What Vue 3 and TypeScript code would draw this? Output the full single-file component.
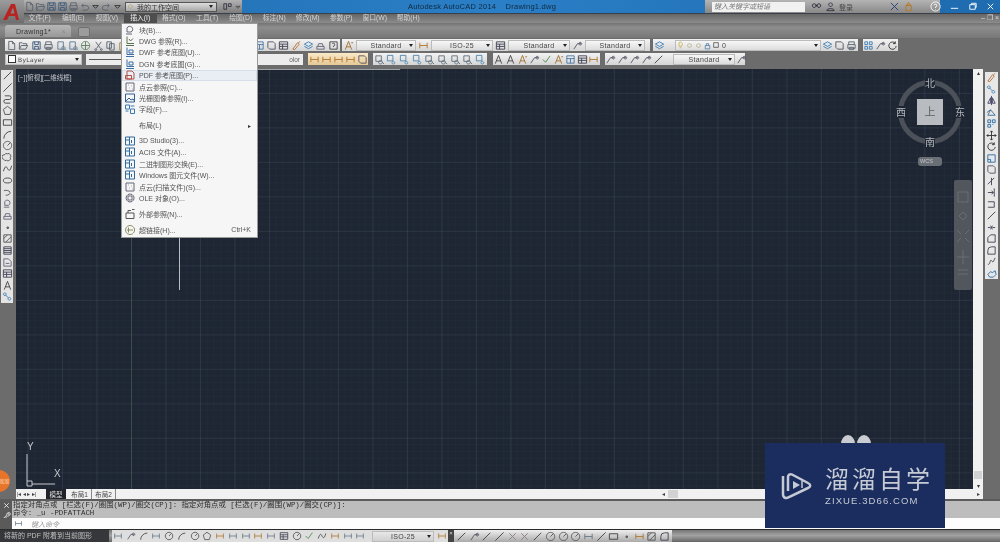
<script setup lang="ts">
import { h } from 'vue'

const P: Record<string, [string, string?]> = {
  new: ['M3 1.5h4l2.5 2.5v6.5h-6.5zM7 1.5V4h2.5'],
  open: ['M1.5 10V3h3l1 1h4v2M1.5 10l2-4h7l-2 4z'],
  save: ['M2 2h8v8H2zM4 2v3h4V2M4 10V7h4v3', '#3d5878'],
  print: ['M3 5V2h6v3M2 5h8v4H2zM3.5 8h5v2.5h-5z'],
  prev: ['M2 2h6v8H2zM8 7a1.8 1.8 0 1 0 .1 0M9.2 9.5l1.6 1.6', '#5f7a92'],
  globe: ['M6 1.5a4.5 4.5 0 1 0 .1 0M1.5 6h9M6 1.5v9', '#5e8060'],
  cut: ['M3 2l5 7M9 2L4 9M3 9.5a1 1 0 1 0 .1 0M9 9.5a1 1 0 1 0 .1 0'],
  copy: ['M2 2h5v7H2zM5 4h5v7H5z'],
  paste: ['M3 3h6v8H3zM5 2h2v2H5z', '#a08040'],
  undo: ['M3 5h5a2.5 2.5 0 0 1 0 5H4M3 5l2-2M3 5l2 2'],
  redo: ['M9 5H4a2.5 2.5 0 0 0 0 5h4M9 5L7 3M9 5L7 7'],
  grid: ['M2 2h3v3H2zM7 2h3v3H7zM2 7h3v3H2zM7 7h3v3H7z', '#3f7fb5'],
  layer: ['M6 2l4.5 2.5L6 7 1.5 4.5zM1.5 7L6 9.5 10.5 7', '#3f7fb5'],
  zoom: ['M2 2h6v6H2zM7 7a2 2 0 1 0 .1 0M9 9l2 2', '#60707f'],
  zoomb: ['M1.5 1.5h6v6h-6zM8 8a1.5 1.5 0 1 0 .1 0', '#4f86b0'],
  A: ['M2.5 10.5L6 1.5l3.5 9M4 7.5h4', '#444'],
  Ao: ['M2.5 10.5L6 1.5l3.5 9M4 7.5h4M9 3h2', '#a07030'],
  check: ['M2 6l3 3 5-7', '#4a8a50'],
  tbl: ['M2 2h8v8H2zM2 5h8M6 5v5', '#4a78a5'],
  dim: ['M2 3v6M10 3v6M2 6h8', '#687888'],
  dimo: ['M2 3v6M10 3v6M2 6h8', '#b07830'],
  lead: ['M2 10L6 4h4M9 2.5a1.5 1.5 0 1 0 .1 0', '#556'],
  line: ['M2 10L10 2M2 10h.1M10 2h.1', '#444'],
  xline: ['M1.5 10.5l9-9M4 8h.1M8 4h.1', '#444'],
  pline: ['M3 2h5a2 2 0 0 1 0 4H4a2 2 0 0 0 0 4h5', '#444'],
  poly: ['M6 1.5l4.5 3.3-1.7 5.5H3.2L1.5 4.8z', '#555'],
  rect: ['M1.5 3h9v6h-9z', '#444'],
  arc: ['M2 10.5A8 8 0 0 1 10 2.5', '#444'],
  circle: ['M6 1.5a4.5 4.5 0 1 0 .1 0M6 6l3-3', '#555'],
  cloud: ['M3 3a2 2 0 0 1 3-1 2 2 0 0 1 3 1 2 2 0 0 1 0 3 2 2 0 0 1-1 3 2 2 0 0 1-3 0 2 2 0 0 1-3-1 2 2 0 0 1 1-5z', '#555'],
  spline: ['M1.5 9c2-6 3-6 4.5-3s3 3 4.5-3', '#444'],
  ell: ['M1.5 6a4.5 2.7 0 1 0 9 0 4.5 2.7 0 1 0-9 0', '#444'],
  ellarc: ['M2 4a4.5 2.7 0 1 1 2 5', '#555'],
  ins: ['M3 4a3 3 0 1 1 4 4H3zM2 10h6', '#667'],
  block: ['M2 7h8v3H2zM3 7l1-3h4l1 3', '#667'],
  pt: ['M5.5 5.5h1.5v1.5H5.5z', '#444'],
  hatch: ['M2 2h8v8H2zM2 6l4-4M4 10l6-6', '#555'],
  hatch2: ['M2 2h8v8H2zM2 4h8M2 6h8M2 8h8', '#445'],
  region: ['M2 2h5l3 3v5H2zM4 7h4', '#667'],
  table: ['M1.5 2h9v8h-9zM1.5 4.5h9M1.5 7h9M5 4.5V10', '#445'],
  erase: ['M2 10l5-7 2 1.5-5 6zM8 3l2-1.5', '#b8723a'],
  cp2: ['M3 2a1.5 1.5 0 1 0 .1 0M8 7a1.5 1.5 0 1 0 .1 0M3.5 4l3.5 3.5', '#3f7fb5'],
  mir: ['M6 1v10M5 3L2 9h3zM7 3l3 6H7z', '#446'],
  off: ['M2 9l3-6 5 6zM1 6l4-3', '#3f6f95'],
  arr: ['M2 2h3v3H2zM7 2h3v3H7zM2 7h3v3H2zM7 7h1', '#2e6ea5'],
  move: ['M6 1v10M1 6h10M6 1L4.5 2.5M6 1l1.5 1.5M6 11l-1.5-1.5M6 11l1.5-1.5M1 6l1.5-1.5M1 6l1.5 1.5M11 6L9.5 4.5M11 6L9.5 7.5', '#333'],
  rot: ['M9 3.5a4 4 0 1 0 1 3M9 1.5v2.5H6.5', '#333'],
  scale: ['M2 2h8v8H2zM2 7h3v3', '#2e6ea5'],
  str: ['M2 2h6l2 2v6H4L2 8z', '#556'],
  trim: ['M6 2v8M2 9l7-7', '#445'],
  ext: ['M9 1.5v9M2 6h6M6 4l2 2-2 2', '#445'],
  brk: ['M3 3H9v6H3M2 3h1M2 9h1', '#445'],
  join: ['M2 6h3M7 6h3M5 4l1 2-1 2M7 4L6 6l1 2', '#445'],
  cham: ['M2 10V5l3-3h5v8z', '#445'],
  fil: ['M2 10V6a4 4 0 0 1 4-4h4v8z', '#445'],
  blend: ['M2 9c3 1 2-6 4-4s1 3 4-3', '#445'],
  expl: ['M2 7l3-3 2 1 3-2 1 4-3 3H4z', '#2e6ea5'],
  bulb: ['M4 2.5a2.5 2.5 0 1 1 4 3L7.5 7h-3L4 5.500zM5 9h2', '#c8a83c'],
  sun: ['M6 3.5a2.5 2.5 0 1 0 .1 0', '#a8a070'],
  lock: ['M3 6h6v4.500H3zM4.500 6V3.500h3V6', '#4578a0'],
  sq: ['M2.500 2.500h7v7h-7z', '#333'],
  pdf: ['M3 2h5l2 2v6H3zM1.500 6.500h6v3.500h-6z', '#b05045'],
  dwg: ['M3 1.500v7h7M5 4l1.500 2L9 3.500M2 10.500h8', '#5a6f50'],
  dwf: ['M3 1.500v7h7M5 4h4v3H5zM2 10.500h8', '#3a6fa5'],
  cld: ['M2 2h8v8H2zM4 4h.5M7 5h.5M5 7h.5M8 8h.5', '#667'],
  img: ['M1.500 2h9v8h-9zM2 9l3-3 2 2 2-1 1.500 2', '#2f5f95'],
  fld: ['M1.500 2h4v4h-4zM6.500 6h4v4.500h-4zM6.500 3h4M1.500 8h3', '#3a78b0'],
  imp: ['M1.500 2h9v8h-9zM1.500 5h4M5.500 2v8M7.500 5v3', '#2f6a9f'],
  ole: ['M6 2a4 4 0 1 0 .1 0M4 4h4v4H4z', '#667'],
  xref: ['M2 5h8v5.500H2zM4 5V2.500h3M8 1.500h2.500', '#555'],
  link: ['M6 1.500a4.500 4.500 0 1 0 .1 0M3 6h6M4.500 3.500v5', '#8a8a60'],
  close: ['M3 3l6 6M9 3L3 9', '#fff'],
  wrench: ['M3 10l4-4a2.500 2.500 0 0 1 3-3L8.500 4.500l1 1L11 4a2.500 2.500 0 0 1-3 3l-4 4z', '#eee'],
  dn: ['M3 5h6L6 8z', '#333'],
  search: ['M3.500 3a2 2 0 1 0 .1 0M8.500 3a2 2 0 1 0 .1 0M5 5h2', '#223'],
  user: ['M6 2a2 2 0 1 0 .1 0M2 10.500c0-3 8-3 8 0z', '#334'],
  xicon: ['M2 2l8 8M10 2l-8 8', '#26406e'],
  key: ['M3 5h6v5.500H3zM6 1.500l2 3H4z', '#b87a20'],
  help: ['M6 1a5 5 0 1 0 .1 0M4.500 4.500a1.500 1.500 0 1 1 1.500 2v1M6 9v.5', '#fff'],
  wsw: ['M2 3h3v6H2zM7 3h3v3H7z', '#334'],
  min: ['M2 8h8', '#fff'],
  max: ['M3 4h6v5H3zM5 4V2.500h5v4.500H9', '#fff'],
  cross: ['M2.500 2.500l7 7M9.500 2.500l-7 7', '#8a7f80'],
  helpb: ['M2 2h8v8H2zM4.500 4.500a1.500 1.500 0 1 1 1.500 2v1', '#444'],
}

const Ic = (props: { n: string; s?: number }) => {
  const e = P[props.n] || P.sq
  const s = props.s ?? 11
  return h('svg', { width: s, height: s, viewBox: '0 0 12 12', fill: 'none', stroke: e[1] || '#5b6470', 'stroke-width': 1, class: 'ic' }, [h('path', { d: e[0] })])
}

const quick = ['new', 'open', 'save', 'save', 'print', 'undo', 'dn', 'redo', 'dn']
const menus = ['文件(F)', '编辑(E)', '视图(V)', '插入(I)', '格式(O)', '工具(T)', '绘图(D)', '标注(N)', '修改(M)', '参数(P)', '窗口(W)', '帮助(H)']
const std = ['new','open','save','print','prev','prev','globe','cut','copy','paste','paste','undo','redo','move','zoom','zoom','zoom','zoom','grid','tbl','tbl','str','table','erase','layer','block','helpb']
const t2a = ['dimo', 'dimo', 'dimo', 'dimo', 'str']
const t2b = ['zoom', 'zoomb', 'zoomb', 'zoomb', 'zoom', 'zoom', 'zoom', 'zoom', 'zoomb']
const t2c = ['A', 'A', 'Ao', 'lead', 'check', 'Ao', 'tbl', 'table', 'dimo']
const t2d = ['lead', 'lead', 'lead', 'lead', 'line']
const left = ['line','xline','pline','poly','rect','arc','circle','cloud','spline','ell','ellarc','ins','block','pt','hatch','hatch2','region','table','A','cp2']
const right = ['erase','cp2','mir','off','arr','move','rot','scale','str','trim','ext','brk','line','join','cham','fil','blend','expl']
const dims1 = ['dim','lead','arc','dim','circle','arc','circle','poly','dimo','dim','dim','dimo','dim','table','circle','check','spline','dimo','dim','dim']
const dims2 = ['line','lead','line','xline','cross','cross','line','circle','circle','circle','dim','xline','rect','pt','dimo','hatch','fil']

type Row = { t: string; i?: string; hot?: boolean; sub?: boolean; key?: string; sep?: boolean }
const rows: Row[] = [
  { t: '块(B)...', i: 'ins' },
  { t: 'DWG 参照(R)...', i: 'dwg' },
  { t: 'DWF 参考底图(U)...', i: 'dwf' },
  { t: 'DGN 参考底图(G)...', i: 'dwf' },
  { t: 'PDF 参考底图(P)...', i: 'pdf', hot: true },
  { t: '点云参照(C)...', i: 'cld' },
  { t: '光栅图像参照(I)...', i: 'img' },
  { t: '字段(F)...', i: 'fld' },
  { t: '布局(L)', sub: true, sep: true },
  { t: '3D Studio(3)...', i: 'imp', sep: true },
  { t: 'ACIS 文件(A)...', i: 'imp' },
  { t: '二进制图形交换(E)...', i: 'imp' },
  { t: 'Windows 图元文件(W)...', i: 'imp' },
  { t: '点云(扫描文件)(S)...', i: 'cld' },
  { t: 'OLE 对象(O)...', i: 'ole' },
  { t: '外部参照(N)...', i: 'xref', sep: true },
  { t: '超链接(H)...', i: 'link', key: 'Ctrl+K', sep: true },
]
</script>

<template>
  <div class="app">
    <header class="title">
      <div class="qa">
        <span class="qaicons"><Ic v-for="(q, i) in quick" :key="i" :n="q" /></span>
        <div class="ws"><Ic n="sun" :s="9" /><span>我的工作空间</span><i class="arrow"></i></div>
        <Ic n="wsw" /><Ic n="dn" :s="8" />
      </div>
      <div class="apptitle">Autodesk AutoCAD 2014 &nbsp; &nbsp;Drawing1.dwg</div>
      <div class="info">
        <div class="search">键入关键字或短语</div>
        <Ic n="search" /><Ic n="user" /><span class="login">登录</span>
        <span class="spacer"></span>
        <Ic n="xicon" /><Ic n="key" /><span class="spacer2"></span><Ic n="help" />
      </div>
      <div class="winbtns"><Ic n="min" /><Ic n="max" /><Ic n="close" /></div>
    </header>

    <nav class="menubar">
      <span v-for="m in menus" :key="m" class="mi" :class="{ on: m === '插入(I)' }">{{ m }}</span>
      <span class="doc"><b>–</b><b>❐</b><b>×</b></span>
    </nav>

    <div class="tabs">
      <div class="tab"><span>Drawing1*</span><em>×</em></div>
      <div class="tabplus"></div>
    </div>

    <div class="tools t1">
      <div class="grp g1"><Ic v-for="(n, i) in std" :key="i" :n="n" /></div>
      <div class="grp g2">
        <Ic n="Ao" /><div class="combo c60">Standard</div>
        <Ic n="dimo" /><div class="combo c62">ISO-25</div>
        <Ic n="table" /><div class="combo c62">Standard</div>
        <Ic n="lead" /><div class="combo c61">Standard</div>
      </div>
      <div class="grp g3">
        <Ic n="layer" /><span class="gap6"></span>
        <div class="combo layerc"><Ic n="bulb" :s="9" /><Ic n="sun" :s="9" /><Ic n="sun" :s="9" /><Ic n="lock" :s="9" /><Ic n="sq" :s="8" /><span class="zero">0</span></div>
        <Ic n="layer" /><Ic n="str" /><Ic n="print" />
      </div>
      <div class="grp g4"><Ic n="grid" /><Ic n="lead" /><Ic n="rot" /></div>
    </div>

    <div class="tools t2">
      <div class="combo bylayer"><i class="swatch"></i><span>ByLayer</span></div>
      <div class="ltype"><span class="dash"></span><span class="ctext">olor</span></div>
      <div class="grp ga"><Ic v-for="(n, i) in t2a" :key="i" :n="n" /></div>
      <div class="grp gb"><Ic v-for="(n, i) in t2b" :key="i" :n="n" /></div>
      <div class="grp gc"><Ic v-for="(n, i) in t2c" :key="i" :n="n" /></div>
      <div class="grp gd"><Ic v-for="(n, i) in t2d" :key="i" :n="n" /><div class="combo c62b">Standard</div><Ic n="lead" /></div>
    </div>

    <main class="work">
      <aside class="lbar"><Ic v-for="(n, i) in left" :key="i" :n="n" /></aside>
      <div class="centre">
        <div class="canvas">
          <span class="vp">[−][俯视][二维线框]</span>
          <div class="axis-v"></div>
          <div class="cross-v"></div>
          <div class="cross-h"></div>

          <div class="cube">
            <div class="ring"></div>
            <div class="face">上</div>
            <span class="dir n">北</span><span class="dir s">南</span><span class="dir w">西</span><span class="dir e">东</span>
            <div class="wcs">WCS</div>
          </div>

          <div class="navbar">
            <svg width="18" height="100" viewBox="0 0 18 100" fill="none" stroke="#686e75">
              <path d="M4 8h10v10H4zM5 32l4-4 4 4-4 4zM3 46l4 4M15 46l-4 4M3 58l4-4M15 58l-4-4M9 66v14M3 73h12M4 86h10M4 90h10" />
            </svg>
          </div>

          <svg class="ucs" width="50" height="52" viewBox="0 0 50 52" fill="none" stroke="#c5c8cc">
            <path d="M10 9v27M10 36v5h5v-5h-5M15 39h23" />
          </svg>
          <span class="ax ay">Y</span><span class="ax ax2">X</span>
          <div class="blob b1"></div><div class="blob b2"></div>
        </div>
        <div class="vscroll"><i class="up">▴</i><span class="fill"></span><i class="thumb"></i><i class="up">▾</i></div>
      </div>
      <aside class="rbar"><Ic v-for="(n, i) in right" :key="i" :n="n" /></aside>
    </main>

    <div class="layouts">
      <span class="nav">|◂ ◂ ▸ ▸|</span>
      <span class="lt model">模型</span>
      <span class="lt">布局1</span>
      <span class="lt">布局2</span>
      <span class="lfill"></span>
      <span class="hb">◂</span><span class="hthumb"></span><span class="hfill"></span><span class="hb end">▸</span>
    </div>

    <section class="cmd">
      <div class="handle"><Ic n="close" :s="9" /><Ic n="wrench" :s="10" /></div>
      <div class="hist">
        <div>指定对角点或 [栏选(F)/圈围(WP)/圈交(CP)]: 指定对角点或 [栏选(F)/圈围(WP)/圈交(CP)]:</div>
        <div>命令: _u -PDFATTACH</div>
      </div>
    </section>
    <div class="cinput"><Ic n="dim" :s="9" /><span class="prompt">键入命令</span></div>

    <footer class="status">
      <div class="stext">将新的 PDF 附着到当前图形</div>
      <div class="sgrp"><Ic v-for="(n, i) in dims1" :key="i" :n="n" /><div class="combo c62s">ISO-25</div><Ic n="dimo" /></div>
      <div class="sx">×</div>
      <div class="sgrp2"><Ic v-for="(n, i) in dims2" :key="i" :n="n" /></div>
    </footer>

    <div class="menu">
      <div v-for="r in rows" :key="r.t" class="row" :class="{ hot: r.hot, sep: r.sep }">
        <span class="ricon"><Ic v-if="r.i" :n="r.i" :s="12" /></span>
        <span class="rtext">{{ r.t }}</span>
        <span v-if="r.key" class="rkey">{{ r.key }}</span>
        <span v-if="r.sub" class="rsub">▸</span>
      </div>
    </div>

    <div class="logo">
      <svg width="20" height="20" viewBox="0 0 20 20"><path d="M1 18L9 2h4l4 16h-3l-1-4H7l-2 4zM8.500 11.500h4L11 5.500z" fill="#b92320" /></svg>
    </div>
    <div class="orange"><span>溜溜</span></div>

    <div class="mark">
      <svg width="36" height="36" viewBox="0 0 36 36" fill="none" stroke="#c5cad4" stroke-width="2.500">
        <path d="M4 8v18c0 4 3 5 6 3l19-9c3-1.500 3-3.500 0-5L13 6.500C11 5.500 9 7 9 9v14" />
        <path d="M14 13l7 4-7 4z" fill="#c5cad4" stroke="none" /><path d="M23 13v7" stroke-width="1.500" />
      </svg>
      <div class="mtxt">
        <div class="mcn">溜溜自学</div>
        <div class="men">ZIXUE.3D66.COM</div>
      </div>
    </div>
  </div>
</template>

<style>
html, body { margin: 0; background: #6c6c6c; }
</style>

<style scoped>
.app { position: relative; width: 1000px; height: 542px; overflow: hidden; display: flex; flex-direction: column; font-family: "Liberation Sans", "Noto Sans CJK SC", sans-serif; font-size: 7px; filter: blur(0.5px); background: #6c6c6c; color: #444; }
.ic { flex: none; display: block; }

.title { height: 13px; flex: none; display: flex; align-items: center; background: linear-gradient(90deg, #1f6cb0, #2b7fc6 50%, #1c69ae); position: relative; }
.qa { width: 218px; margin-left: 24px; height: 13px; display: flex; align-items: center; background: linear-gradient(#b2b2b2, #7d7d7d); flex: none; gap: 1px; }
.qaicons { display: flex; width: 98px; justify-content: space-between; margin-right: 2px; }
.ws { width: 94px; height: 10px; background: linear-gradient(#ddd, #a8a8a8); border: 1px solid #555; box-sizing: border-box; display: flex; align-items: center; gap: 2px; font-size: 7px; color: #333; margin-right: 4px; }
.ws span { flex: 1; }
.arrow { width: 0; height: 0; border: 2px solid transparent; border-top: 3px solid #222; border-bottom: 0; margin-right: 3px; }
.apptitle { position: absolute; left: 408px; top: 2px; font-size: 7.500px; letter-spacing: .25px; color: #10283e; white-space: nowrap; }
.info { position: absolute; left: 705px; width: 235px; height: 13px; background: linear-gradient(#b4b4b4, #888); display: flex; align-items: center; gap: 3px; box-sizing: border-box; padding-left: 7px; }
.search { width: 93px; flex: none; height: 10px; background: #f1f1f1; font-style: italic; color: #777; font-size: 7px; line-height: 10px; padding-left: 2px; box-sizing: border-box; margin-right: 3px; }
.login { color: #444; font-size: 7px; white-space: nowrap; flex: none; }
.spacer { width: 30px; flex: none; }
.spacer2 { width: 10px; flex: none; }
.winbtns { position: absolute; left: 945px; width: 55px; height: 13px; display: flex; justify-content: space-around; align-items: center; background: #1f6cb0; }

.menubar { height: 10px; flex: none; display: flex; align-items: center; padding-left: 23px; background: linear-gradient(#626262, #8c8c8c); position: relative; box-shadow: inset 0 1px #38414b; }
.mi { width: 33.500px; text-align: center; font-size: 6.800px; color: #d6d6d6; line-height: 10px; white-space: nowrap; box-sizing: border-box; }
.mi.on { background: #4e4e4e; color: #eee; }
.doc { position: absolute; right: 1px; top: 1px; display: flex; gap: 2px; color: #ddd; font-size: 7px; }
.doc b { font-weight: normal; }

.tabs { height: 15px; flex: none; display: flex; align-items: flex-end; gap: 7px; padding-left: 5px; background: linear-gradient(#747474, #8d8d8d 30%, #777); box-sizing: border-box; padding-bottom: 1px; }
.tab { width: 66px; height: 12px; background: linear-gradient(#b6b6b6, #999); border-radius: 3px 3px 0 0; display: flex; justify-content: space-between; align-items: center; padding: 0 5px 0 11px; box-sizing: border-box; font-size: 7px; color: #333; letter-spacing: .3px; }
.tab em { font-style: normal; color: #888; }
.tabplus { width: 12px; height: 10px; background: #9c9c9c; border-radius: 2px; border: 1px solid #707070; box-sizing: border-box; }

.tools { flex: none; display: flex; align-items: center; background: #6c6c6c; box-sizing: border-box; }
.t1 { height: 14px; padding-left: 5px; }
.t2 { height: 14px; padding-left: 5px; }
.grp { display: flex; align-items: center; height: 12px; background: linear-gradient(#f3f3f3, #d5d5d5); flex: none; box-sizing: border-box; }
.g1 { width: 335px; justify-content: space-between; padding: 0 1px; }
.g2 { width: 308px; margin-left: 2px; gap: 2px; padding-left: 1px; }
.g3 { width: 205px; margin-left: 3px; padding: 0 1px; gap: 1px; }
.g4 { width: 35px; margin-left: 5px; justify-content: space-around; }
.gap6 { width: 12px; }
.combo { height: 11px; flex: none; background: linear-gradient(#f7f7f7, #dcdcdc); border: 1px solid #bbb; box-sizing: border-box; text-align: center; font-size: 7px; line-height: 9px; color: #444; position: relative; letter-spacing: .3px; }
.combo::after { content: ""; position: absolute; right: 2px; top: 3px; border: 2px solid transparent; border-top: 3px solid #222; border-bottom: 0; }
.c60 { width: 60px; } .c62 { width: 62px; } .c61 { width: 60px; }
.layerc { width: 146px; display: flex; align-items: center; text-align: left; }
.zero { margin-left: 2px; }
.bylayer { width: 77px; text-align: left; display: flex; align-items: center; gap: 2px; font-family: "DejaVu Sans", sans-serif; font-size: 6px; }
.swatch { width: 6px; height: 6px; border: 1px solid #333; background: #fff; margin-left: 2px; }
.ltype { width: 217px; height: 11px; margin-left: 4px; background: #ececec; display: flex; align-items: center; justify-content: space-between; padding: 0 3px; box-sizing: border-box; flex: none; }
.dash { width: 60px; border-top: 1px solid #555; }
.ctext { color: #666; font-size: 6.500px; }
.ga { width: 60px; margin-left: 5px; justify-content: space-around; background: linear-gradient(#fbe9c8, #e5c896); }
.gb { width: 114px; margin-left: 5px; justify-content: space-around; }
.gc { width: 107px; margin-left: 6px; justify-content: space-around; }
.gd { width: 140px; margin-left: 5px; gap: 1px; }
.c62b { width: 62px; margin-left: 8px; }

.work { flex: 1; min-height: 0; display: flex; padding-top: 3px; box-sizing: border-box; }
.lbar { width: 12px; margin: 1px 3px 0 1px; height: 233px; background: #e4e4e4; display: flex; flex-direction: column; align-items: center; justify-content: space-around; flex: none; }
.centre { flex: 1; display: flex; min-width: 0; }
.canvas { flex: 1; position: relative; overflow: hidden; background-color: #1e2633;
  background-image:
    linear-gradient(90deg, rgba(105,120,140,.17) 1px, transparent 1px),
    linear-gradient(rgba(105,120,140,.13) 1px, transparent 1px),
    linear-gradient(90deg, rgba(90,105,125,.05) 1px, transparent 1px),
    linear-gradient(rgba(90,105,125,.05) 1px, transparent 1px);
  background-size: 34.500px 100%, 100% 34.500px, 6.900px 100%, 100% 6.900px;
  background-position: 11.500px 0, 0 24px, 4.600px 0, 0 3px;
}
.axis-v { position: absolute; left: 115px; top: 0; bottom: 0; width: 1px; background: rgba(80,120,90,.35); }
.vp { position: absolute; left: 2px; top: 3px; color: #c4c8cc; font-size: 6.500px; white-space: nowrap; }
.cross-v { position: absolute; left: 163px; top: 160px; height: 61px; width: 1px; background: #b8bcc0; }
.cross-h { position: absolute; left: 240px; right: 573px; top: 0; height: 1px; background: #9ea2a6; }

.cube { position: absolute; left: 881px; top: 10px; width: 66px; height: 92px; }
.ring { position: absolute; left: 1px; top: 1px; width: 64px; height: 64px; box-sizing: border-box; border: 5px solid #4b5059; border-radius: 50%; }
.face { position: absolute; left: 20px; top: 20px; width: 26px; height: 26px; background: #b8bbbf; color: #5d6063; font-size: 11px; line-height: 26px; text-align: center; }
.dir { position: absolute; color: #b5b8bc; font-size: 10px; line-height: 12px; background: #1e2633; font-family: "Noto Sans CJK SC", sans-serif; }
.n { left: 28px; top: -2px; } .s { left: 28px; top: 57px; } .w { left: -1px; top: 27px; } .e { left: 58px; top: 27px; }
.wcs { position: absolute; left: 21px; top: 78px; width: 24px; height: 9px; border-radius: 3px; background: #6a6f76; color: #c6c8cb; font-size: 5.500px; line-height: 9px; padding-left: 2px; box-sizing: border-box; }
.navbar { position: absolute; left: 938px; top: 111px; width: 18px; height: 110px; background: #52575e; border-radius: 2px; padding-top: 4px; box-sizing: border-box; }
.ucs { position: absolute; left: 1px; top: 376px; }
.ax { position: absolute; color: #c5c8cc; font-size: 10px; line-height: 10px; }
.ay { left: 11px; top: 373px; } .ax2 { left: 38px; top: 400px; }
.blob { position: absolute; width: 14px; height: 18px; border-radius: 50%; background: #c9cdd1; top: 366px; }
.b1 { left: 825px; } .b2 { left: 841px; }
.vscroll { width: 10px; flex: none; background: #f1f1f1; display: flex; flex-direction: column; align-items: center; font-size: 6px; color: #333; }
.vscroll i { font-style: normal; }
.fill { flex: 1; }
.thumb { width: 8px; height: 8px; background: #cfd2d2; margin-bottom: 3px; }
.rbar { width: 13px; margin: 3px 2px 0 2px; height: 207px; background: #e7e7e7; display: flex; flex-direction: column; align-items: center; justify-content: space-around; flex: none; }

.layouts { height: 10px; flex: none; margin: 0 17px 0 16px; background: #f1f1f1; display: flex; align-items: center; font-size: 6.500px; color: #444; }
.nav { width: 30px; font-size: 5.500px; padding-left: 1px; white-space: nowrap; overflow: hidden; flex: none; box-sizing: border-box; }
.lt { width: 24px; text-align: center; flex: none; border-right: 1px solid #888; box-sizing: border-box; }
.lt.model { background: #20242a; color: #ddd; width: 20px; border: 0; margin-right: 2px; }
.lfill { flex: 1; }
.hb { width: 10px; text-align: center; font-size: 5.500px; }
.hthumb { width: 10px; height: 8px; background: #d2d2d2; }
.hfill { width: 295px; }
.cmd { flex: none; height: 19px; display: flex; background: #bdbdbd; border-top: 2px solid #5c5c5c; box-sizing: border-box; }
.handle { width: 12px; background: #5a5a5a; display: flex; flex-direction: column; align-items: center; justify-content: space-around; }
.hist { font-family: "Liberation Mono", "Noto Sans CJK SC", monospace; font-size: 7.400px; line-height: 8px; color: #2c2c2c; padding-left: 1px; white-space: pre; }
.cinput { flex: none; height: 11px; background: #fdfdfd; display: flex; align-items: center; gap: 8px; box-sizing: border-box; border-left: 12px solid #5a5a5a; padding-left: 2px; color: #999; font-style: italic; font-size: 7px; }
.status { flex: none; height: 13px; display: flex; align-items: center; background: linear-gradient(#777, #a2a2a2 45%, #666); border-top: 1px solid #2a2a2a; box-sizing: border-box; }
.stext { width: 109px; background: #35373a; color: #c0c0c0; height: 100%; font-size: 7px; line-height: 12px; padding-left: 4px; box-sizing: border-box; white-space: nowrap; flex: none; }
.sgrp { width: 336px; margin-left: 3px; height: 100%; background: #dedede; display: flex; align-items: center; justify-content: space-between; padding: 0 1px; box-sizing: border-box; flex: none; gap: 1px; }
.sgrp svg { width: 10px; height: 10px; }
.c62s { width: 62px; background: linear-gradient(#e8e8e8, #cfcfcf); margin-left: 4px; }
.sx { width: 6px; height: 100%; background: #444; color: #ddd; font-size: 6px; text-align: center; flex: none; }
.sgrp2 { width: 218px; height: 100%; background: linear-gradient(#eee, #aaa); display: flex; align-items: center; justify-content: space-between; padding: 0 2px; box-sizing: border-box; flex: none; }

.menu { position: absolute; left: 122px; top: 24px; width: 135px; height: 213px; background: #f6f6f6; box-shadow: 0 0 0 1px #9a9a9a; box-sizing: border-box; z-index: 3; }
.row { height: 11.400px; display: flex; align-items: center; padding-left: 2px; padding-right: 6px; box-sizing: border-box; color: #555; font-size: 7px; white-space: nowrap; }
.row.hot { background: #e9eef5; box-shadow: inset 0 0 0 1px #d6deea; }
.row.sep { margin-top: 4.400px; }
.ricon { width: 15px; flex: none; display: flex; }
.rtext { flex: 1; }
.rsub { font-size: 6px; color: #333; }
.logo { position: absolute; left: 0; top: 0; width: 24px; height: 23px; background: linear-gradient(#9c9c9c, #6e6e6e); z-index: 2; display: flex; justify-content: center; align-items: center; }
.orange { position: absolute; left: -12px; top: 470px; width: 22px; height: 22px; border-radius: 50%; background: #e8742a; color: #fbd9b0; font-size: 5px; line-height: 22px; text-align: right; padding-right: 1px; box-sizing: border-box; }
.mark { position: absolute; left: 765px; top: 443px; width: 180px; height: 85px; background: #1b2d5e; display: flex; align-items: center; gap: 10px; padding-left: 14px; box-sizing: border-box; z-index: 4; }
.mtxt { color: #c5cad4; align-self: flex-start; margin-top: 16.500px; }
.mcn { font-family: "Noto Sans CJK SC", sans-serif; font-size: 24px; line-height: 35px; letter-spacing: 3px; white-space: nowrap; }
.men { font-size: 9.500px; line-height: 11px; letter-spacing: 1.100px; white-space: nowrap; }
</style>
